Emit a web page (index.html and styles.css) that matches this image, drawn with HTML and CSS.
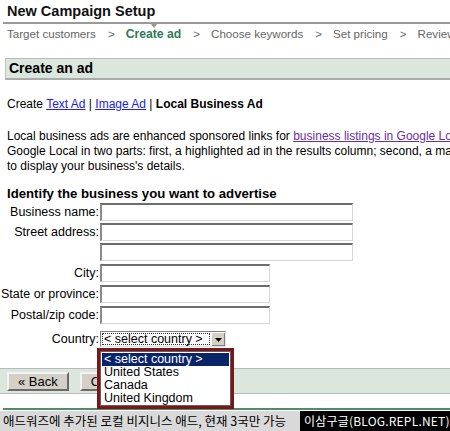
FILE: index.html
```html
<!DOCTYPE html>
<html>
<head>
<meta charset="utf-8">
<link rel="stylesheet" href="styles.css">
</head>
<body>
<div class="page">
  <h1 class="title">New Campaign Setup</h1>
  <div class="steps-rule"><span class="pointer"></span></div>
  <div class="steps">
    <span class="step">Target customers</span><span class="sep">&gt;</span><span class="step current">Create ad</span><span class="sep">&gt;</span><span class="step">Choose keywords</span><span class="sep">&gt;</span><span class="step">Set pricing</span><span class="sep">&gt;</span><span class="step">Review</span>
  </div>
  <div class="section-head">Create an ad</div>
  <p class="types">Create <a class="link" href="#">Text Ad</a> | <a class="link" href="#">Image Ad</a> | <b>Local Business Ad</b></p>
  <div class="intro">
    <div class="line">Local business ads are enhanced sponsored links for <a class="visited" href="#">business listings in Google Local</a>. They appear on</div>
    <div class="line">Google Local in two parts: first, a highlighted ad in the results column; second, a map marker</div>
    <div class="line">to display your business's details.</div>
  </div>
  <h2 class="identify">Identify the business you want to advertise</h2>
  <div class="form">
    <label class="lbl">Business name:</label><div class="field gap-a"><span class="input wide"></span></div>
    <label class="lbl">Street address:</label><div class="field gap-a"><span class="input wide"></span></div>
    <span class="lbl"></span><div class="field gap-b"><span class="input wide"></span></div>
    <label class="lbl">City:</label><div class="field gap-b"><span class="input short"></span></div>
    <label class="lbl">State or province:</label><div class="field gap-b"><span class="input short"></span></div>
    <label class="lbl">Postal/zip code:</label><div class="field gap-c"><span class="input short"></span></div>
    <label class="lbl">Country:</label>
    <div class="field">
      <div class="select"><span class="sel-text">&lt; select country &gt;</span><span class="sel-btn"><svg width="7" height="4" viewBox="0 0 7 4"><path d="M0 0H7L3.5 4Z" fill="#000"/></svg></span></div>
    </div>
  </div>
  <div class="buttons">
    <span class="btn">&laquo; Back</span><span class="btn">Continue &raquo;</span>
  </div>
  <div class="green-rule"></div>
  <div class="caption">
    <span class="cap-text">애드워즈에 추가된 로컬 비지니스 애드, 현재 3국만 가능</span>
    <span class="credit">이삼구글(BLOG.REPL.NET)</span>
  </div>

  <div class="dropdown">
    <div class="list">
      <div class="opt active">&lt; select country &gt;</div>
      <div class="opt">United States</div>
      <div class="opt">Canada</div>
      <div class="opt">United Kingdom</div>
    </div>
  </div>
</div>
</body>
</html>
```

FILE: styles.css
```css
html, body {
  margin: 0;
  padding: 0;
  background: #fff;
}
.page {
  position: relative;
  width: 450px;
  height: 431px;
  overflow: hidden;
  font-family: "Liberation Sans", Arial, sans-serif;
  font-size: 12px;
  color: #000;
}
.title {
  margin: 0;
  padding: 0 0 0 7px;
  height: 22px;
  line-height: 22px;
  font-size: 14.5px;
  font-weight: bold;
  color: #111;
}
.steps-rule {
  position: relative;
  margin-left: 3px;
  height: 2px;
  background: #999;
}
.pointer {
  position: absolute;
  left: 147px;
  top: 1px;
  width: 0;
  height: 0;
  border-left: 4px solid transparent;
  border-right: 4px solid transparent;
  border-top: 5px solid #999;
}
.steps {
  display: flex;
  align-items: center;
  height: 19px;
  padding-left: 7px;
  font-size: 11.6px;
  color: #666;
  white-space: nowrap;
}
.step.current {
  color: #2f7a55;
  font-weight: bold;
  font-size: 12.2px;
}
.sep {
  margin: 0 11px 0 12px;
}
.section-head {
  margin: 15px 0 0 5px;
  height: 19px;
  line-height: 19px;
  padding-left: 3px;
  background: #dbe6dd;
  border-top: 1px solid #b8bcb8;
  border-left: 1px solid #c0c4c0;
  border-bottom: 2px solid #a9aca9;
  font-size: 14px;
  font-weight: bold;
  color: #000;
}
.types {
  margin: 17px 0 0 7px;
  line-height: 15px;
  white-space: nowrap;
}
.link {
  color: #2020ee;
}
.visited {
  color: #6a2ea0;
}
.intro {
  margin: 17px 0 0 7px;
  white-space: nowrap;
}
.line {
  line-height: 15px;
}
.identify {
  margin: 12px 0 0 7px;
  font-size: 13.2px;
  line-height: 15px;
  font-weight: bold;
}
.form {
  margin-top: 2px;
  display: grid;
  grid-template-columns: 100px 1fr;
  align-items: start;
  font-size: 12.5px;
}
.lbl {
  text-align: right;
  padding-right: 1px;
  line-height: 18px;
  white-space: nowrap;
}
.field {
  display: flex;
}
.gap-a { margin-bottom: 2px; }
.gap-b { margin-bottom: 3px; }
.gap-c { margin-bottom: 6px; }
.input {
  display: block;
  box-sizing: border-box;
  height: 18px;
  background: #fff;
  border-top: 2px solid #6c6c6c;
  border-left: 2px solid #8a8a8a;
  border-right: 1px solid #d8d8d8;
  border-bottom: 1px solid #d8d8d8;
}
.input.wide { width: 253px; }
.input.short { width: 170px; }
.select {
  display: flex;
  box-sizing: border-box;
  width: 126px;
  height: 16px;
  margin-top: 1px;
  border-top: 1px solid #808080;
  border-left: 1px solid #808080;
  border-right: 1px solid #e0e0e0;
  border-bottom: 1px solid #e0e0e0;
  background: #fff;
}
.sel-text {
  flex: 1;
  margin: 1px;
  border: 1px dotted #333;
  line-height: 11px;
  font-size: 12.5px;
  padding-left: 1px;
  white-space: nowrap;
}
.sel-btn {
  width: 13px;
  display: flex;
  align-items: center;
  justify-content: center;
  background: #d4d0c8;
  border-left: 1px solid #fff;
  border-top: 1px solid #fff;
  box-shadow: inset -1px -1px 0 #808080;
}
.buttons {
  margin-top: 20px;
  display: flex;
  gap: 11px;
  align-items: center;
  height: 24px;
  padding-left: 7px;
  background: #dbe6dd;
  border-top: 1px solid #b8bcb8;
  border-bottom: 1px solid #b8bcb8;
}
.btn {
  box-sizing: border-box;
  height: 19px;
  line-height: 15px;
  padding: 0 9px;
  background: #d4d0c8;
  border-top: 2px solid #f4f4f4;
  border-left: 2px solid #f4f4f4;
  border-right: 2px solid #6a6a6a;
  border-bottom: 2px solid #6a6a6a;
  font-size: 13px;
  color: #000;
  white-space: nowrap;
}
.green-rule {
  margin: 14px 0 0 3px;
  height: 2px;
  background: #4f8a6a;
}
.caption {
  display: flex;
  justify-content: space-between;
  align-items: stretch;
  height: 20px;
  margin-top: 1px;
  background: #d9d9d9;
  font-family: "Noto Sans CJK KR", "Liberation Sans", sans-serif;
  font-size: 12.5px;
  white-space: nowrap;
}
.cap-text {
  padding-left: 3px;
  line-height: 20px;
  color: #000;
}
.credit {
  width: 150px;
  padding-left: 4px;
  box-sizing: border-box;
  background: #000;
  color: #fff;
  line-height: 20px;
  font-size: 12px;
  letter-spacing: 0.2px;
}
.dropdown {
  position: absolute;
  left: 97px;
  top: 348px;
  width: 137px;
  height: 61px;
  box-sizing: border-box;
  border: 3px solid #7a1616;
  background: #fff;
}
.list {
  height: 100%;
  box-sizing: border-box;
  border: 1px solid #606060;
  padding: 1px;
}
.opt {
  height: 13px;
  line-height: 13px;
  padding-left: 2px;
  font-size: 12.5px;
  white-space: nowrap;
}
.opt.active {
  background: #0a246a;
  color: #fff;
}
```
